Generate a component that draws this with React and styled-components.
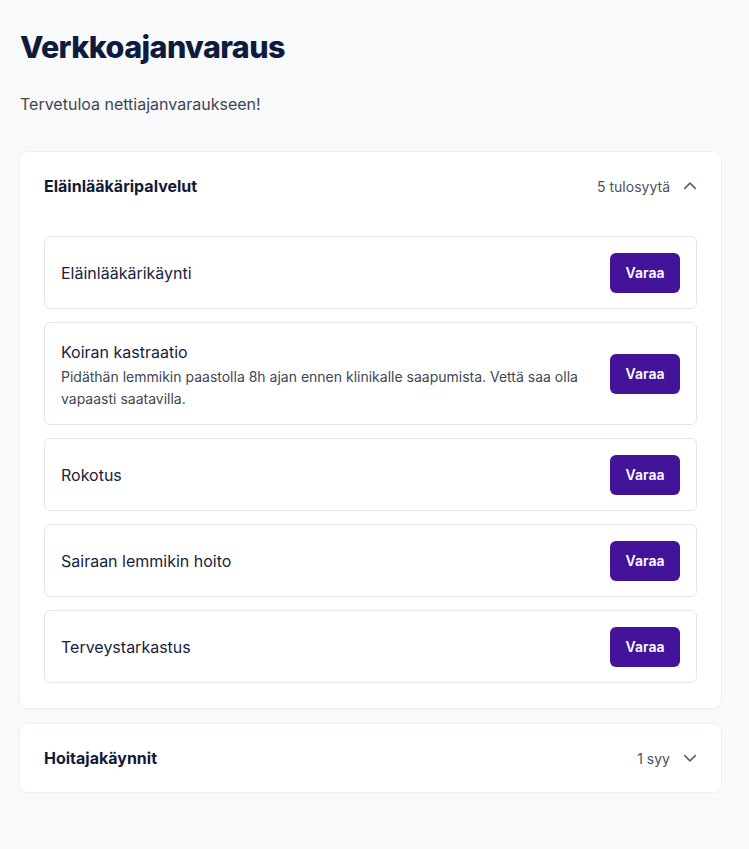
import styled, { createGlobalStyle } from 'styled-components';

const GlobalStyle = createGlobalStyle`
  html, body {
    margin: 0;
    background: #f8f9fb;
  }
  body {
    font-family: Inter, "Noto Sans", sans-serif;
    color: #1a2240;
  }
`;

const Page = styled.div`
  padding: 27px 28px 40px 20px;
`;

const Title = styled.h1`
  margin: 0;
  font-family: Inter, sans-serif;
  font-size: 30.5px;
  line-height: 40px;
  font-weight: 800;
  letter-spacing: -0.6px;
  color: #0f1b3d;
`;

const Intro = styled.p`
  margin: 25px 0 36px;
  font-size: 16px;
  line-height: 24px;
  color: #3f4654;
`;

const Stack = styled.div`
  display: flex;
  flex-direction: column;
  gap: 16px;
`;

const Card = styled.section`
  background: #fff;
  border-radius: 8px;
  box-shadow: 0 0 0 1px #eef0f3, 0 1px 2px rgba(16, 24, 40, 0.03);
`;

const CardHeader = styled.div`
  display: flex;
  align-items: center;
  justify-content: space-between;
  height: 68px;
  padding: 0 24px;
`;

const CardTitle = styled.h2`
  margin: 0;
  font-size: 16px;
  font-weight: 700;
  color: #111a3a;
`;

const Meta = styled.div`
  display: flex;
  align-items: center;
  gap: 13px;
  font-size: 14px;
  color: #4a5160;
`;

const List = styled.div`
  display: flex;
  flex-direction: column;
  gap: 13px;
  padding: 16px 24px 25px;
`;

const Item = styled.div`
  display: flex;
  align-items: center;
  justify-content: space-between;
  gap: 24px;
  min-height: 73px;
  padding: 0 16px;
  border: 1px solid #e4e6ea;
  border-radius: 6px;
  box-sizing: border-box;
`;

const ItemBody = styled.div`
  padding: ${p => (p.$hasText ? '17px 0 14px' : '0')};
`;

const ItemName = styled.div`
  font-size: 16px;
  line-height: 24px;
  color: #1a2240;
`;

const ItemText = styled.div`
  margin-top: 2px;
  font-size: 14px;
  line-height: 22px;
  color: #3f4654;
`;

const BookButton = styled.button`
  flex-shrink: 0;
  width: 70px;
  height: 40px;
  border: 0;
  border-radius: 6px;
  background: #43139a;
  color: #fff;
  font-family: Inter, sans-serif;
  font-size: 14px;
  font-weight: 600;
  cursor: pointer;
`;

const Chevron = ({ up }) => (
  <svg width="14" height="14" viewBox="0 0 24 24" fill="none" stroke="#5b6270" strokeWidth="2.8" strokeLinecap="round" strokeLinejoin="round">
    <path d={up ? 'M3 16l9-9 9 9' : 'M3 8l9 9 9-9'} />
  </svg>
);

const services = [
  { name: 'Eläinlääkärikäynti' },
  {
    name: 'Koiran kastraatio',
    text: 'Pidäthän lemmikin paastolla 8h ajan ennen klinikalle saapumista. Vettä saa olla vapaasti saatavilla.',
  },
  { name: 'Rokotus' },
  { name: 'Sairaan lemmikin hoito' },
  { name: 'Terveystarkastus' },
];

export default function App() {
  return (
    <>
      <GlobalStyle />
      <Page>
        <Title>Verkkoajanvaraus</Title>
        <Intro>Tervetuloa nettiajanvaraukseen!</Intro>
        <Stack>
          <Card>
            <CardHeader>
              <CardTitle>Eläinlääkäripalvelut</CardTitle>
              <Meta>
                5 tulosyytä
                <Chevron up />
              </Meta>
            </CardHeader>
            <List>
              {services.map(s => (
                <Item key={s.name}>
                  <ItemBody $hasText={!!s.text}>
                    <ItemName>{s.name}</ItemName>
                    {s.text && <ItemText>{s.text}</ItemText>}
                  </ItemBody>
                  <BookButton>Varaa</BookButton>
                </Item>
              ))}
            </List>
          </Card>
          <Card>
            <CardHeader>
              <CardTitle>Hoitajakäynnit</CardTitle>
              <Meta>
                1 syy
                <Chevron />
              </Meta>
            </CardHeader>
          </Card>
        </Stack>
      </Page>
    </>
  );
}
